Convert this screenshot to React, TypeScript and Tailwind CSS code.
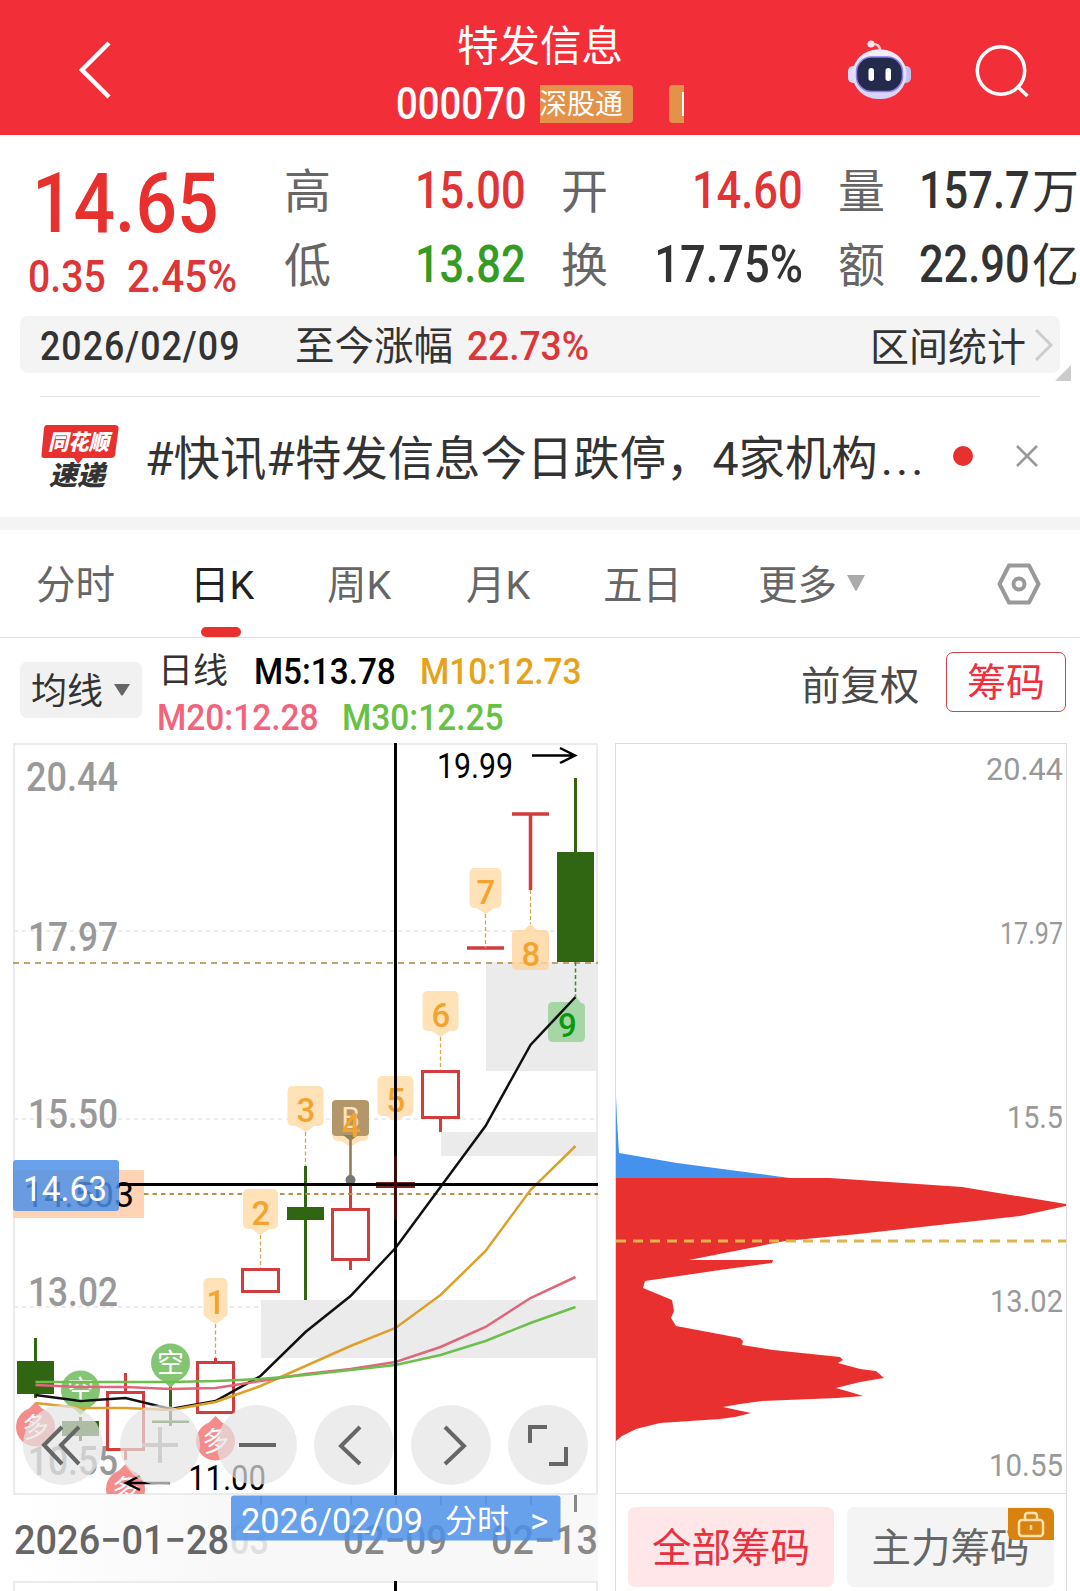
import type { ReactNode } from "react";

const FONT = "font-['Roboto','Noto_Sans_CJK_SC',sans-serif]";

// Horizontally squeezed digits, kept in the flow as a normal span
function Num({ children, className = "scale-x-[.87]" }: { children: ReactNode; className?: string }) {
  return (
    <span className={`inline-block whitespace-nowrap leading-none font-medium ${className}`}>
      {children}
    </span>
  );
}

function Header() {
  return (
    <header className="h-[135px] bg-[#f22f38] text-white flex justify-between">
      <div className="w-[390px] pl-[76px] pt-[38px]">
        <svg width="38" height="64" viewBox="0 0 38 64" fill="none" stroke="#fff" strokeWidth="4.5">
          <path d="M33 5 L6 32 L33 59" />
        </svg>
      </div>
      <div className="w-[300px] flex flex-col items-center">
        <h1 className="mt-[21px] text-[41.5px] leading-[52px]">特发信息</h1>
        <div className="w-full flex items-center h-[38px] mt-[12px] pl-[6px]">
          <Num className="origin-left text-[44px] w-[144px] scale-x-[.87]">000070</Num>
          <span className="bg-[#e4914a] h-[38px] w-[93px] rounded-r-[4px] text-[28px] leading-[40px] overflow-hidden whitespace-nowrap -indent-[1px]">
            深股通
          </span>
          <span className="bg-[#e4914a] h-[38px] w-[15px] ml-[36px] rounded-l-[4px] flex justify-end items-center">
            <i className="w-[2px] h-[24px] bg-white" />
          </span>
        </div>
      </div>
      <div className="w-[390px] flex pt-[37px] pl-[156px]">
        <svg width="66" height="66" viewBox="0 0 66 66">
          <defs>
            <linearGradient id="shell" x1="0" y1="0" x2="0" y2="1">
              <stop offset="0" stopColor="#f8eef8" />
              <stop offset="1" stopColor="#d6d2f8" />
            </linearGradient>
          </defs>
          <path d="M34 14 Q34 6 25 7" fill="none" stroke="#f6d0de" strokeWidth="2.500" />
          <circle cx="25" cy="7" r="3.5" fill="#fbe6f0" />
          <rect x="2" y="29" width="12" height="17" rx="5" fill="#dcdaf6" />
          <rect x="53" y="29" width="12" height="17" rx="5" fill="#c3c0f0" />
          <rect x="6.5" y="12.500" width="54" height="49.500" rx="25" fill="url(#shell)" />
          <rect x="10.500" y="20" width="46" height="34.500" rx="15" fill="#232b4d" stroke="#8b7ee6" strokeWidth="1.500" />
          <rect x="22.500" y="31" width="5.500" height="13" rx="2.700" fill="#fff" />
          <rect x="39.500" y="31" width="5.500" height="13" rx="2.700" fill="#fff" />
        </svg>
        <svg width="60" height="66" viewBox="0 0 60 66" className="ml-[62px]" fill="none" stroke="#fff" strokeWidth="3.500">
          <circle cx="27" cy="33.500" r="23.700" />
          <path d="M44 50 L53.500 59" />
        </svg>
      </div>
    </header>
  );
}

const stats = [
  { label: "高", value: "15.00", unit: "", color: "text-[#e03436]" },
  { label: "开", value: "14.60", unit: "", color: "text-[#e03436]" },
  { label: "量", value: "157.7", unit: "万", color: "text-[#333]" },
  { label: "低", value: "13.82", unit: "", color: "text-[#359b22]" },
  { label: "换", value: "17.75%", unit: "", color: "text-[#333]" },
  { label: "额", value: "22.90", unit: "亿", color: "text-[#333]" },
];

function Quote() {
  return (
    <section className="h-[181px] flex">
      <div className="w-[249px] shrink-0 text-[#e8302f]">
        <div className="h-[84px] mt-[27px] pl-[32px]">
          <Num className="origin-left text-[84px] scale-x-[.87]">14.65</Num>
        </div>
        <div className="flex pl-[28px] mt-[8px] text-[45px] text-[#dd3538]">
          <Num className="origin-left w-[108px] scale-x-[.87]">0.35</Num>
          <Num className="origin-left scale-x-[.9]">2.45%</Num>
        </div>
      </div>
      <div className="grid grid-cols-[83px_194px_83px_194px_83px_194px] grid-rows-[74px_74px] mt-[19px]">
        {stats.map((s) => (
          <div key={s.label} className="contents">
            <span className="pl-[35px] text-[47px] leading-[75px] text-[#666]">{s.label}</span>
            <span className={`flex justify-end items-center text-[52px] ${s.color}`}>
              <Num className={s.value.endsWith("%") ? "origin-right scale-x-[.87]" : "origin-right scale-x-[.835]"}>{s.value}</Num>
              {s.unit && <span className="text-[47px] leading-[75px] h-[74px] ml-[2px] mr-px">{s.unit}</span>}
            </span>
          </div>
        ))}
      </div>
    </section>
  );
}

function RangeBar() {
  return (
    <div className="relative mx-[20px] h-[57px] bg-[#f4f4f4] rounded-[8px] flex items-center text-[#333] text-[40px]">
      <Num className="origin-left ml-[20px] mt-[3px] w-[255px] text-[41px] tracking-[1.2px] scale-x-[.87]">2026/02/09</Num>
      <span className="leading-[61px] h-[57px] w-[172px] text-[39.5px]">至今涨幅</span>
      <Num className="origin-left mt-[3px] text-[41px] text-[#dd3538] scale-x-[.905]">22.73%</Num>
      <span className="leading-[65px] h-[57px] ml-auto text-[39px]">区间统计</span>
      <svg width="20" height="36" viewBox="0 0 20 36" className="ml-[8px] mr-[6px]" fill="none" stroke="#ccc" strokeWidth="3">
        <path d="M2 3 L17 18 L2 33" />
      </svg>
      <svg width="16" height="16" className="absolute -right-[11px] -bottom-[8px]">
        <path d="M16 0 V16 H0Z" fill="#ccc" />
      </svg>
    </div>
  );
}

function News() {
  return (
    <section className="mx-[40px] mt-[23px] h-[121px] pb-[2px] border-t border-[#e4e4e4] flex items-center">
      <svg width="80" height="66" viewBox="0 0 80 66" className="mt-[2px]">
        <path d="M5 1 H75 Q79 1 78.500 5 L75 31 Q74.500 34 71 34 H43 L38 40 L34 34 H4 Q1 34 1.500 31 L4 4 Q4.500 1 7 1Z" fill="#e8302f" />
        <text x="8" y="26" fontSize="22" fontWeight="900" fontStyle="italic" fill="#fff" textLength="61" lengthAdjust="spacingAndGlyphs">同花顺</text>
        <text x="9" y="61" fontSize="27" fontWeight="900" fontStyle="italic" fill="#333" textLength="56" lengthAdjust="spacingAndGlyphs">速递</text>
      </svg>
      <p className="ml-[25px] w-[782px] text-[46.4px] leading-[60px] text-[#333] whitespace-nowrap mt-[5px]">
        #快讯#特发信息今日跌停，4家机构<span className="tracking-[3px] ml-[3px]">...</span>
      </p>
      <i className="size-[20px] rounded-full bg-[#e8302f] ml-[26px]" />
      <svg width="22" height="22" viewBox="0 0 22 22" className="ml-[43px]" stroke="#999" strokeWidth="2.500">
        <path d="M1 1 L21 21 M21 1 L1 21" />
      </svg>
    </section>
  );
}

function Tabs() {
  return (
    <nav className="h-[108px] border-b border-[#e0e0e0] flex text-[39.5px] leading-[112px] text-[#666] pl-[36px] whitespace-nowrap">
      <span className="w-[154px]">分时</span>
      <span className="w-[137px] text-[#222] relative">
        日K
        <i className="absolute left-[11px] bottom-0 w-[40px] h-[10px] rounded-full bg-[#e8302f]" />
      </span>
      <span className="w-[139px]">周K</span>
      <span className="w-[137px]">月K</span>
      <span className="w-[155px]">五日</span>
      <span className="w-[88px]">更多</span>
      <svg width="20" height="18" viewBox="0 0 20 18" className="mt-[44px]">
        <path d="M1 1 H19 L11 16 Q10 18 9 16Z" fill="#aaa" />
      </svg>
      <svg width="44" height="42" viewBox="0 0 44 42" className="ml-[131px] mt-[33px]" fill="none" stroke="#999" strokeWidth="4" strokeLinejoin="round">
        <path d="M12 2.500 H32 L41.500 21 L32 39.500 H12 L2.500 21Z" />
        <circle cx="22" cy="21" r="5.500" />
      </svg>
    </nav>
  );
}

function Averages() {
  return (
    <div className="h-[105px] flex text-[37px]">
      <div className="ml-[20px] mt-[24px] w-[122px] h-[56px] bg-[#f1f1f1] rounded-[7px] flex items-center pl-[11px] text-[#333]">
        <span className="text-[36px] leading-[50px] mt-[3px]">均线</span>
        <svg width="18" height="14" viewBox="0 0 18 14" className="ml-[10px]">
          <path d="M1 1 H17 L10 12 Q9 13 8 12Z" fill="#666" />
        </svg>
      </div>
      <div className="ml-[16px] w-[620px]">
        <div className="flex h-[46px] mt-[10px] items-center">
          <span className="text-[35px] leading-[46px] mt-[2px] w-[96px] text-[#333]">日线</span>
          <Num className="origin-left w-[166px] text-black scale-x-[.9]">M5:13.78</Num>
          <Num className="origin-left text-[#e6a21a] scale-x-[.905]">M10:12.73</Num>
        </div>
        <div className="flex h-[46px] items-center">
          <Num className="origin-left w-[185px] -ml-px text-[#f2647c] scale-x-[.905]">M20:12.28</Num>
          <Num className="origin-left text-[#66c144] scale-x-[.905]">M30:12.25</Num>
        </div>
      </div>
      <span className="ml-[23px] w-[145px] shrink-0 text-[39.5px] leading-[98px] text-[#4a4a4a]">前复权</span>
      <span className="mt-[14px] w-[120px] h-[60px] shrink-0 border-[1.5px] border-[#d0404f] rounded-[7px] text-center text-[39px] leading-[61px] text-[#f0303f]">
        筹码
      </span>
    </div>
  );
}

const GREEN = "#306612";
const RED = "#d23c3c";
const cx = (i: number) => 35.5 + i * 45;

const candles = [
  { i: 0, up: false, top: 1361, bottom: 1394, high: 1338, low: 1398 },
  { i: 1, up: false, top: 1421, bottom: 1436, high: 1417, low: 1441 },
  { i: 2, up: true, top: 1391, bottom: 1451, high: 1373, low: 1460 },
  { i: 3, up: false, top: 1420.5, bottom: 1423, high: 1375, low: 1426 },
  { i: 4, up: true, top: 1361, bottom: 1414, high: 1358, low: 1413 },
  { i: 5, up: true, top: 1268, bottom: 1293, high: 1269, low: 1292 },
  { i: 6, up: false, top: 1207, bottom: 1220, high: 1166, low: 1300 },
  { i: 7, up: true, top: 1208, bottom: 1261, high: 1181, low: 1270 },
  { i: 9, up: true, top: 1070, bottom: 1119, high: 1071, low: 1132 },
  { i: 12, up: false, top: 852, bottom: 962, high: 778, low: 962 },
];

const averages = [
  { color: "#111", ys: [1395, 1401, 1398, 1409, 1401, 1376, 1332, 1296, 1248, 1187, 1126, 1045, 997] },
  { color: "#dda02a", ys: [1403, 1408, 1408, 1410, 1402, 1386, 1366, 1346, 1328, 1295, 1251, 1190, 1146] },
  { color: "#e0667a", ys: [1385, 1387, 1387, 1389, 1388, 1381, 1374, 1369, 1362, 1347, 1327, 1298, 1277] },
  { color: "#6cbf4b", ys: [1382, 1382, 1382, 1382, 1381, 1379, 1375, 1370, 1365, 1355, 1341, 1323, 1307] },
];

const tags = [
  { n: 1, x: 215.5, w: 24, y: 1278, end: 1358 },
  { n: 2, x: 260.5, w: 35, y: 1189, end: 1268 },
  { n: 3, x: 305.5, w: 36, y: 1086, end: 1166 },
  { n: 4, x: 350.5, w: 36, y: 1101, end: 1181 },
  { n: 5, x: 395.5, w: 36, y: 1076, end: 1122 },
  { n: 6, x: 440.5, w: 36, y: 991, end: 1070 },
  { n: 7, x: 485.5, w: 32, y: 868, end: 948 },
];

const levels = [
  { label: "20.44", y: 791 },
  { label: "17.97", y: 951 },
  { label: "15.50", y: 1128 },
  { label: "13.02", y: 1306 },
  { label: "10.55", y: 1475 },
];

function Ball({ x, y, up }: { x: number; y: number; up: boolean }) {
  const d = up ? -1 : 1;
  return (
    <g>
      <g fill={up ? "#f58c8c" : "#84c574"}>
        <circle cx={x} cy={y} r="19.5" />
        <path d={`M${x - 10} ${y + 15 * d} L${x} ${y + 25 * d} L${x + 10} ${y + 15 * d}Z`} />
      </g>
      <text x={x} y={y + 9.5} fontSize="27" textAnchor="middle" fill="#fff" transform={up ? `rotate(-8 ${x} ${y})` : undefined}>
        {up ? "多" : "空"}
      </text>
    </g>
  );
}

function KLine() {
  return (
    <svg width="598" height="848" viewBox="0 743 598 848" className="block">
      <defs>
        <linearGradient id="axis">
          <stop offset="0" stopColor="#fff" />
          <stop offset=".35" stopColor="#f8f8f8" />
        </linearGradient>
        <clipPath id="plot">
          <rect x="13" y="743" width="585" height="751" />
        </clipPath>
      </defs>
      <rect x="14" y="1495" width="584" height="86" fill="url(#axis)" />
      <g stroke="#ebebeb" strokeWidth="2" fill="none">
        <rect x="14" y="744" width="583" height="750" />
        <path d="M13 1582 H598 M14 1582 V1591 M597 1582 V1591" />
        <path d="M14 931 H598 M14 1119 H598 M14 1307 H598" strokeDasharray="4 4" />
      </g>
      <g fill="#ebebeb">
        <rect x="486" y="962" width="112" height="109" />
        <rect x="441" y="1132" width="157" height="24" />
        <rect x="261" y="1300" width="337" height="58" />
      </g>
      <g fill="#999" fontSize="40" fontWeight="500">
        {levels.map((l, i) => (
          <text key={l.label} x={i ? 28 : 26} y={l.y} textLength={i ? 90 : 92} lengthAdjust="spacingAndGlyphs">{l.label}</text>
        ))}
      </g>

      <g strokeWidth="3">
        {candles.map((c) => (
          <g key={c.i} stroke={c.up ? RED : GREEN} fill={c.up ? "#fff" : GREEN}>
            <path d={`M${cx(c.i)} ${c.high} V${c.top} M${cx(c.i)} ${c.bottom} V${c.low}`} />
            {c.up ? (
              <rect x={cx(c.i) - 18} y={c.top + 1.5} width="36" height={c.bottom - c.top - 3} />
            ) : (
              <rect x={cx(c.i) - 18.5} y={c.top} width="37" height={c.bottom - c.top} stroke="none" />
            )}
          </g>
        ))}
        <path d="M467 948 H504 M512 814 H549 M530.5 814 V890" stroke={RED} strokeWidth="3.5" />
        <path d="M376 1185 H415" stroke="#7a2424" strokeWidth="6" />
      </g>

      <path d="M13 963 H598" stroke="#bfa470" strokeWidth="2" strokeDasharray="6 5" />
      <path d="M144 1194 H598" stroke="#c08d4a" strokeWidth="2" strokeDasharray="4.500 4" />

      <g clipPath="url(#plot)">
        <Ball x={80.500} y={1390} up={false} />
        <Ball x={170.500} y={1363} up={false} />
        <Ball x={35.500} y={1427} up />
        <Ball x={215.500} y={1441} up />
        <Ball x={125.500} y={1489} up />
      </g>

      {/* numbered sequence tags */}
      {tags.map((t) => (
        <g key={t.n}>
          <path d={`M${t.x} ${t.y + 46} V${t.end}`} stroke="#d0a84a" strokeWidth="1.3" strokeDasharray="4 2.5" />
          <rect x={t.x - t.w / 2} y={t.y} width={t.w} height="40" rx="5" fill="#ffe2b8" />
          <path d={`M${t.x - 9} ${t.y + 40} L${t.x} ${t.y + 46} L${t.x + 9} ${t.y + 40}Z`} fill="#ffe2b8" />
        </g>
      ))}
      <path d="M530.500 890 V924" stroke="#d0a84a" strokeWidth="1.300" strokeDasharray="4 2.500" />
      <path d="M512 935 Q512 930 517 930 H524 L530.500 924 L537 930 H544 Q549 930 549 935 V965 Q549 970 544 970 H517 Q512 970 512 965Z" fill="#ffd49c" fillOpacity=".8" />
      <path d="M575.500 962 V997" stroke="#2f8f2f" strokeWidth="1.500" strokeDasharray="4 2.500" />
      <path d="M548 1007 Q548 1002 553 1002 H570 L575.500 996 L581 1003 Q585 1003 585 1007 V1037 Q585 1042 580 1042 H553 Q548 1042 548 1037Z" fill="#a6d5a6" />
      <rect x="332" y="1100" width="37" height="36" rx="4" fill="#b3966a" />
      <path d="M343 1135 H358 L350.500 1141Z" fill="#8f7d60" />
      <path d="M350.500 1140 V1180" stroke="#907a58" strokeWidth="2.500" />
      <circle cx="350.500" cy="1180" r="5" fill="#777" />
      <text x="350.500" y="1128" fontSize="30" textAnchor="middle" fill="#ffe2b8">B</text>
      <g fill="#f2a42e" fontSize="33" fontWeight="500" textAnchor="middle">
        {tags.map((t) => (
          <text key={t.n} x={t.x + 0.5} y={t.y + 36}>{t.n}</text>
        ))}
        <text x="531" y="966">8</text>
        <text x="567.500" y="1037" fill="#0a980f">9</text>
      </g>

      {averages.map((a) => (
        <polyline key={a.color} fill="none" stroke={a.color} strokeWidth="2.500" points={a.ys.map((y, i) => `${cx(i)},${y}`).join(" ")} />
      ))}

      <g fill="none" stroke="#000" strokeWidth="2.500">
        <path d="M532 755.500 H575 M560 748 L575 755.500 L560 763" />
        <path d="M170 1483 H126 M140 1476 L126 1483 L140 1490" />
      </g>
      <g fontSize="35">
        <text x="437" y="778" textLength="76" lengthAdjust="spacingAndGlyphs">19.99</text>
        <text x="188" y="1490" textLength="78" lengthAdjust="spacingAndGlyphs">11.00</text>
      </g>

      {/* date axis */}
      <g fill="#666" fontSize="40" fontWeight="500">
        <text x="14" y="1554" textLength="215" lengthAdjust="spacingAndGlyphs">2026−01−28</text>
        <text x="230" y="1554" fill="#e0e0e0" textLength="39" lengthAdjust="spacingAndGlyphs">03</text>
        <text x="343" y="1554" fill="#888" textLength="104" lengthAdjust="spacingAndGlyphs">02−09</text>
        <text x="491" y="1554" fill="#888" textLength="107" lengthAdjust="spacingAndGlyphs">02−13</text>
      </g>
      <path d="M575.500 1495 V1512" stroke="#888" strokeWidth="3" />

      {/* crosshair and its labels */}
      <path d="M119 1184.500 H598 M395.500 743 V1495 M395.500 1581 V1591" stroke="#000" strokeWidth="3" />
      <path d="M395.500 1156 V1220" stroke="#3a0c0c" strokeWidth="3" />
      <rect x="13" y="1170" width="131" height="48" fill="#ffd3b3" />
      <path d="M119 1184.500 H144" stroke="#000" strokeWidth="3" />
      <text x="24" y="1207" fontSize="35" textLength="110" lengthAdjust="spacingAndGlyphs">14.503</text>
      <rect x="13" y="1160" width="106" height="51" rx="3" fill="#4b90e8" fillOpacity=".84" />
      <text x="23" y="1201" fontSize="35" fill="#fff" textLength="84" lengthAdjust="spacingAndGlyphs">14.63</text>
      <rect x="231" y="1495.500" width="329.500" height="45" rx="3" fill="#4b90e8" fillOpacity=".84" />
      <path d="M261 1496 V1505 M306 1496 V1505 M351 1496 V1505 M396 1496 V1505 M441 1496 V1505 M486 1496 V1505 M531 1496 V1505" stroke="#5f94d8" strokeWidth="2" />
      <g fill="#fff" fontSize="35">
        <text x="241" y="1533" textLength="182" lengthAdjust="spacingAndGlyphs">2026/02/09</text>
        <text x="445" y="1532" fontSize="32">分时</text>
        <text x="530" y="1533">&gt;</text>
      </g>
    </svg>
  );
}

const controls = [
  "M39 22 L21 40 L39 59 M56 22 L38 40 L56 59",
  "M22 40 H58 M40 22 V58",
  "M22 40 H59",
  "M46 22 L27 41 L46 59",
  "M34 22 L53 41 L34 59",
  "M39 22 H22 V38 M41 59 H58 V42",
];

function Controls() {
  return (
    <div className="absolute left-[23px] top-[662px] flex gap-[17px]">
      {controls.map((d, i) => (
        <span key={i} className="size-[80px] rounded-full bg-[#e4e4e4]/70">
          <svg width="80" height="80" viewBox="0 0 80 80" fill="none" stroke={i === 1 ? "#cfcfcf" : "#666"} strokeWidth="4">
            <path d={d} />
          </svg>
        </span>
      ))}
    </div>
  );
}

const chips =
  "616,1178 830,1178 962,1187 1066,1204 1066,1206 1020,1216 858,1234 785,1241 689,1260 773,1260 772,1263 720,1270 645,1281 643,1288 672,1300 674,1311 671,1318 676,1326 740,1338 743,1341 742,1345 773,1350 840,1357 843,1360 838,1363 860,1369 876,1371 884,1378 860,1382 836,1388 850,1392 863,1396 837,1398 762,1401 740,1404 723,1407 751,1413 735,1417 720,1419 660,1423 636,1429 622,1436 616,1441";

function ChipPanel() {
  return (
    <div className="w-[452px] h-[848px] border border-b-0 border-[#dcdcdc]">
      <svg width="450" height="749" viewBox="616 744 450 749" className="block">
        <polygon points="616,1096 617,1120 619,1153 677,1163 790,1178 616,1178" fill="#4592ee" />
        <polygon points={chips} fill="#e8302f" />
        <path d="M616 1241 H1067" stroke="#e0b44a" strokeWidth="3" strokeDasharray="10 7" />
        <g fill="#999" fontSize="32" textAnchor="end">
          <text x="1063" y="780" textLength="77" lengthAdjust="spacingAndGlyphs">20.44</text>
          <text x="1063" y="944" textLength="63" lengthAdjust="spacingAndGlyphs">17.97</text>
          <text x="1063" y="1128" textLength="56" lengthAdjust="spacingAndGlyphs">15.5</text>
          <text x="1063" y="1312" textLength="73" lengthAdjust="spacingAndGlyphs">13.02</text>
          <text x="1063" y="1476" textLength="74" lengthAdjust="spacingAndGlyphs">10.55</text>
        </g>
      </svg>
      <div className="border-t border-[#dcdcdc] flex gap-[13px] pl-[12px] pt-[13px] text-[39.5px] leading-[84px] text-center">
        <span className="w-[206px] h-[80px] rounded-[7px] bg-[#ffe7e9] text-[#e8303f]">全部筹码</span>
        <span className="w-[207px] h-[80px] rounded-[7px] bg-[#f4f4f4] text-[#666] relative">
          主力筹码
          <i className="absolute right-0 top-px w-[46px] h-[32px] bg-[#d9820f] rounded-tr-[6px] rounded-bl-[6px] flex justify-center">
            <svg width="28" height="28" viewBox="0 0 28 28" className="mt-[2px]" fill="none" stroke="#ffe2b0" strokeWidth="2.500">
              <rect x="2" y="10" width="24" height="16" rx="3" />
              <path d="M8 10 V6 Q8 3 11 3 H17 Q20 3 20 6 V10 M14 15 V20" />
            </svg>
          </i>
        </span>
      </div>
    </div>
  );
}

export default function App() {
  return (
    <div className={`w-[1080px] h-[1591px] overflow-hidden bg-white ${FONT}`}>
      <Header />
      <Quote />
      <RangeBar />
      <News />
      <div className="h-[13px] bg-[#f4f4f4]" />
      <Tabs />
      <Averages />
      <div className="flex gap-[17px]">
        <div className="relative">
          <KLine />
          <Controls />
        </div>
        <ChipPanel />
      </div>
    </div>
  );
}
